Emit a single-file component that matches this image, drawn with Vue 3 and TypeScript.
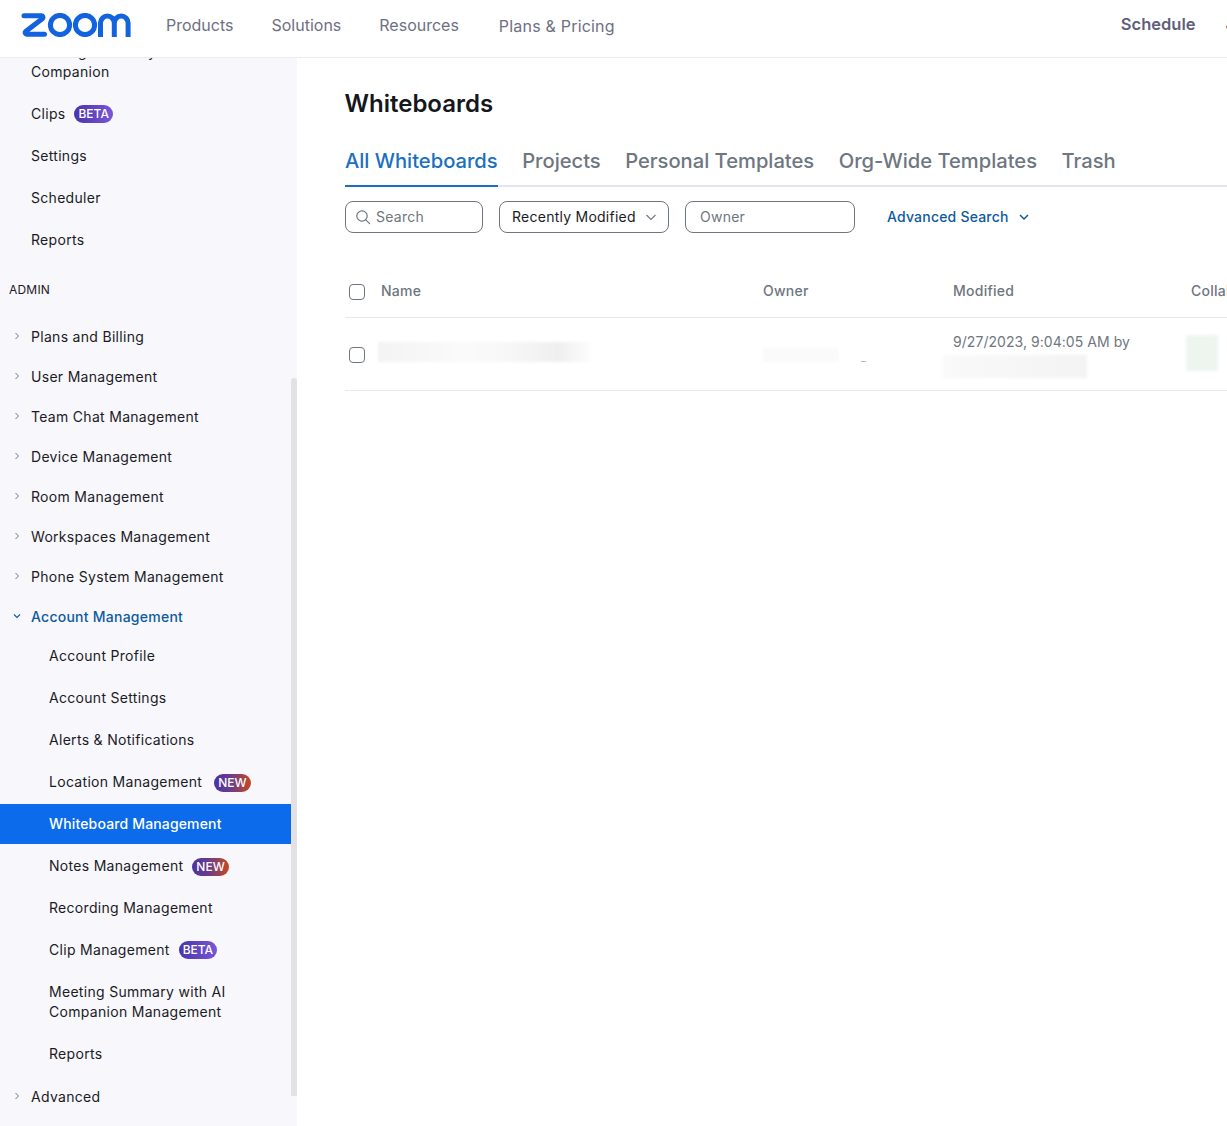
<script setup lang="ts">
interface NavItem {
  label: string
  badge?: 'beta' | 'new'
  active?: boolean
  wide?: boolean
}

const topItems: NavItem[] = [
  { label: 'Meeting Summary with AI Companion' },
  { label: 'Clips', badge: 'beta' },
  { label: 'Settings' },
  { label: 'Scheduler' },
  { label: 'Reports' },
]
const adminItems = [
  'Plans and Billing',
  'User Management',
  'Team Chat Management',
  'Device Management',
  'Room Management',
  'Workspaces Management',
  'Phone System Management',
]
const accountItems: NavItem[] = [
  { label: 'Account Profile' },
  { label: 'Account Settings' },
  { label: 'Alerts & Notifications' },
  { label: 'Location Management', badge: 'new', wide: true },
  { label: 'Whiteboard Management', active: true },
  { label: 'Notes Management', badge: 'new' },
  { label: 'Recording Management' },
  { label: 'Clip Management', badge: 'beta' },
  { label: 'Meeting Summary with AI Companion Management' },
  { label: 'Reports' },
]
const tabs = ['All Whiteboards', 'Projects', 'Personal Templates', 'Org-Wide Templates', 'Trash']
</script>

<template>
  <div class="page">
    <header class="header">
      <svg class="logo" width="110" height="24" viewBox="0 0 110 24" fill="none" stroke="#1463de" stroke-width="5" aria-label="Zoom">
        <path d="M3 2.8h17.4a1.6 1.6 0 0 1 1.2 2.7L4.6 18.5a1.6 1.6 0 0 0 1.2 2.7H23.5" stroke-linecap="round" stroke-linejoin="round" />
        <circle cx="39" cy="12" r="9.6" />
        <circle cx="64" cy="12" r="9.6" />
        <path d="M79.5 24V10a6.9 6.9 0 0 1 13.8 0V24M93.3 10a6.9 6.9 0 0 1 13.8 0V24" />
      </svg>
      <nav class="top-nav">
        <a>Products</a>
        <a>Solutions</a>
        <a>Resources</a>
        <a class="plans">Plans &amp; Pricing</a>
      </nav>
      <a class="schedule">Schedule</a>
      <a class="join">Join</a>
    </header>

    <div class="body">
      <aside class="sidebar">
        <div class="scroll">
          <ul class="group top">
            <li v-for="item in topItems" :key="item.label" class="row" :class="{ tall: item.label.length > 25 }">
              <span class="label">{{ item.label }}</span>
              <span v-if="item.badge" class="badge" :class="item.badge">{{ item.badge.toUpperCase() }}</span>
            </li>
          </ul>

          <div class="section">ADMIN</div>

          <ul class="admin">
            <li v-for="label in adminItems" :key="label" class="parent">
              <svg class="chev" width="8" height="8" viewBox="0 0 8 8" fill="none" stroke="#6e7680" stroke-width="1"><path d="M2.5 1l3 3-3 3" /></svg>
              <span>{{ label }}</span>
            </li>
            <li class="parent open">
              <svg class="chev" width="8" height="8" viewBox="0 0 8 8" fill="none" stroke="#0e5a9c" stroke-width="1.1"><path d="M1 2.5l3 3 3-3" /></svg>
              <span>Account Management</span>
            </li>
          </ul>

          <ul class="group sub">
            <li
              v-for="item in accountItems"
              :key="item.label + item.active"
              class="row"
              :class="{ tall: item.label.length > 30, active: item.active, wide: item.wide }"
            >
              <span class="label">{{ item.label }}</span>
              <span v-if="item.badge" class="badge" :class="item.badge">{{ item.badge.toUpperCase() }}</span>
            </li>
          </ul>

          <div class="parent advanced">
            <svg class="chev" width="8" height="8" viewBox="0 0 8 8" fill="none" stroke="#6e7680" stroke-width="1"><path d="M2.5 1l3 3-3 3" /></svg>
            <span>Advanced</span>
          </div>
        </div>
        <div class="scrollbar"></div>
      </aside>

      <main class="main">
        <h1 class="title">Whiteboards</h1>

        <div class="tabs">
          <a v-for="(tab, i) in tabs" :key="tab" class="tab" :class="{ current: i === 0 }">{{ tab }}</a>
        </div>

        <div class="toolbar">
          <div class="field search">
            <svg width="16" height="16" viewBox="0 0 16 16" fill="none" stroke="#6e7680" stroke-width="1.2">
              <circle cx="7" cy="7" r="5.2" />
              <path d="M10.8 10.8l3.8 3.8" stroke-linecap="round" />
            </svg>
            <span>Search</span>
          </div>
          <div class="field sort">
            <span>Recently Modified</span>
            <svg width="12" height="12" viewBox="0 0 12 12" fill="none" stroke="#6e7680" stroke-width="1.1"><path d="M1.5 4l4.5 4.5L10.5 4" /></svg>
          </div>
          <div class="field owner"><span>Owner</span></div>
          <a class="advanced-search">
            <span>Advanced Search</span>
            <svg width="12" height="12" viewBox="0 0 12 12" fill="none" stroke="#0e5a9c" stroke-width="1.5"><path d="M2 4l4 4 4-4" /></svg>
          </a>
        </div>

        <div class="table">
          <div class="tr thead">
            <span class="check"></span>
            <span>Name</span>
            <span>Owner</span>
            <span>Modified</span>
            <span>Collaborators</span>
          </div>
          <div class="tr tbody">
            <span class="check"></span>
            <div class="blur blur-name"></div>
            <div class="owner-cell">
              <div class="blur blur-owner"></div>
              <i class="dash"></i>
            </div>
            <div class="modified">
              <span>9/27/2023, 9:04:05 AM by</span>
              <div class="blur blur-by"></div>
            </div>
            <div class="blur blur-collab"></div>
          </div>
        </div>
      </main>
    </div>
  </div>
</template>

<style>
html,
body {
  margin: 0;
  background: #fff;
  overflow: hidden;
}
</style>

<style scoped>
.page {
  width: 1227px;
  height: 1126px;
  display: flex;
  flex-direction: column;
  overflow: hidden;
  font-family: Inter, "Liberation Sans", sans-serif;
  -webkit-font-smoothing: antialiased;
}

.header {
  flex: 0 0 58px;
  box-sizing: border-box;
  border-bottom: 1px solid #ececf0;
  display: flex;
  align-items: center;
  padding-left: 21px;
  overflow: hidden;
  background: #fff;
}
.logo {
  flex: none;
  margin-top: -8px;
}
.top-nav {
  flex: none;
  display: flex;
  gap: 38px;
  margin-left: 35px;
  font-size: 16px;
  color: #6e7082;
  margin-top: -7px;
}
.plans {
  margin-top: 1px;
  margin-left: 2px;
  letter-spacing: 0.2px;
}
.schedule {
  flex: none;
  margin-left: 506px;
  font-size: 16.5px;
  font-weight: 600;
  color: #5f5f7c;
  margin-top: -9px;
}
.join {
  flex: none;
  margin-left: 30px;
  font-size: 16.5px;
  font-weight: 600;
  color: #5f5f7c;
  margin-top: -9px;
}

.body {
  flex: 1;
  display: flex;
  min-height: 0;
}

.sidebar {
  flex: 0 0 297px;
  position: relative;
  overflow: hidden;
  background: #f7f7fc;
  color: #1b1b24;
  font-size: 14px;
  letter-spacing: 0.3px;
}
.scroll {
  width: 291px;
  margin-top: -26px;
}
ul {
  list-style: none;
  margin: 0;
  padding: 0;
}
.group {
  display: flex;
  flex-direction: column;
  gap: 2px;
}
.group.top {
  padding: 0 80px 0 31px;
}
.row {
  height: 40px;
  display: flex;
  align-items: center;
  gap: 9px;
  line-height: 20px;
}
.row.tall {
  height: 60px;
}
.row.wide {
  gap: 12px;
}
.sub .row {
  padding-left: 49px;
  padding-right: 40px;
}
.row.active {
  background: #0b6bea;
  color: #fff;
  font-weight: 500;
  letter-spacing: 0.15px;
}
.badge {
  flex: none;
  height: 18px;
  padding: 0 4px;
  border-radius: 9px;
  font-size: 12px;
  font-weight: 500;
  line-height: 18px;
  letter-spacing: 0;
  color: #fff;
}
.badge.beta {
  background: linear-gradient(90deg, #4a35a8, #7a55d8);
}
.badge.new {
  margin-top: 2px;
  background: linear-gradient(90deg, #4b34a4, #6a3c8c 45%, #c6491f);
}

.section {
  height: 56px;
  box-sizing: border-box;
  padding: 19px 0 0 9px;
  font-size: 12px;
  line-height: 22px;
  letter-spacing: 0.2px;
}

.parent {
  height: 40px;
  display: flex;
  align-items: center;
  gap: 10px;
  padding-left: 13px;
}
.parent.open {
  color: #0e5a9c;
  font-weight: 500;
  letter-spacing: 0.25px;
}
.advanced {
  margin-top: 2px;
}
.chev {
  flex: none;
}

.scrollbar {
  position: absolute;
  right: 0;
  top: 320px;
  width: 6px;
  height: 718px;
  border-radius: 3px 3px 0 0;
  background: #e2e2e5;
}

.main {
  flex: 1;
  min-width: 0;
  overflow: hidden;
  padding-left: 48px;
}
.title {
  margin: 31px 0 0 -0.5px;
  font-size: 24px;
  line-height: 30px;
  font-weight: 600;
  color: #16161d;
}
.tabs {
  display: flex;
  gap: 24.5px;
  margin-top: 23px;
  height: 45px;
  box-sizing: border-box;
  border-bottom: 2px solid #e4e5ea;
  width: 900px;
}
.tab {
  height: 45px;
  box-sizing: border-box;
  font-size: 20.15px;
  line-height: 38px;
  font-weight: 500;
  color: #6e7680;
  white-space: nowrap;
}
.tab.current {
  color: #1a6fc0;
  border-bottom: 2px solid #1a6fc0;
}

.toolbar {
  display: flex;
  align-items: center;
  gap: 16px;
  margin-top: 14px;
  height: 32px;
  font-size: 14px;
  letter-spacing: 0.25px;
}
.field {
  box-sizing: border-box;
  height: 32px;
  border: 1px solid #6e7680;
  border-radius: 8px;
  display: flex;
  align-items: center;
  color: #6e7680;
}
.field span,
.advanced-search span {
  margin-top: -2px;
}
.search {
  width: 138px;
  padding-left: 9px;
  gap: 5px;
}
.sort {
  width: 170px;
  padding: 0 11px 0 12px;
  justify-content: space-between;
  color: #1b1b24;
}
.owner {
  width: 170px;
  padding-left: 14px;
}
.advanced-search {
  display: flex;
  align-items: center;
  gap: 9px;
  margin-left: 16px;
  color: #0e5a9c;
  font-weight: 500;
  letter-spacing: 0.2px;
}

.table {
  margin-top: 32px;
  width: 900px;
  font-size: 14px;
  letter-spacing: 0.25px;
  color: #6e7680;
}
.tr {
  display: grid;
  grid-template-columns: 36px 382px 190px 238px 1fr;
  align-items: center;
  box-sizing: border-box;
  border-bottom: 1px solid #e9eaee;
}
.thead {
  height: 53px;
  padding-bottom: 2px;
  font-weight: 500;
}
.tbody {
  height: 73px;
}
.check {
  box-sizing: border-box;
  width: 16px;
  height: 16px;
  margin: 1px 0 0 4px;
  border: 1px solid #6e7680;
  border-radius: 4px;
  background: #fff;
}
.thead .check {
  margin-top: 3px;
}
.blur {
  filter: blur(1.5px);
}
.blur-name {
  width: 212px;
  height: 20px;
  margin: -4px 0 0 -3px;
  background: linear-gradient(90deg, #f3f3f4, #fafafa 40%, #f8f8f8 58%, #efefef 85%, #fcfcfc);
}
.owner-cell {
  position: relative;
  height: 30px;
}
.blur-owner {
  width: 76px;
  height: 14px;
  margin: 9px 0 0 0;
  background: #fafafa;
}
.dash {
  position: absolute;
  left: 98px;
  top: 22px;
  width: 5px;
  height: 1px;
  background: #b8b8bc;
}
.modified {
  display: flex;
  flex-direction: column;
  margin-top: 1px;
  line-height: 20px;
  letter-spacing: 0.05px;
}
.blur-by {
  width: 144px;
  height: 23px;
  margin: 3px 0 0 -10px;
  background: linear-gradient(90deg, #f9f9f9, #f3f3f3);
}
.blur-collab {
  width: 32px;
  height: 36px;
  margin: -2px 0 0 -5px;
  background: #eef5ef;
}
</style>
